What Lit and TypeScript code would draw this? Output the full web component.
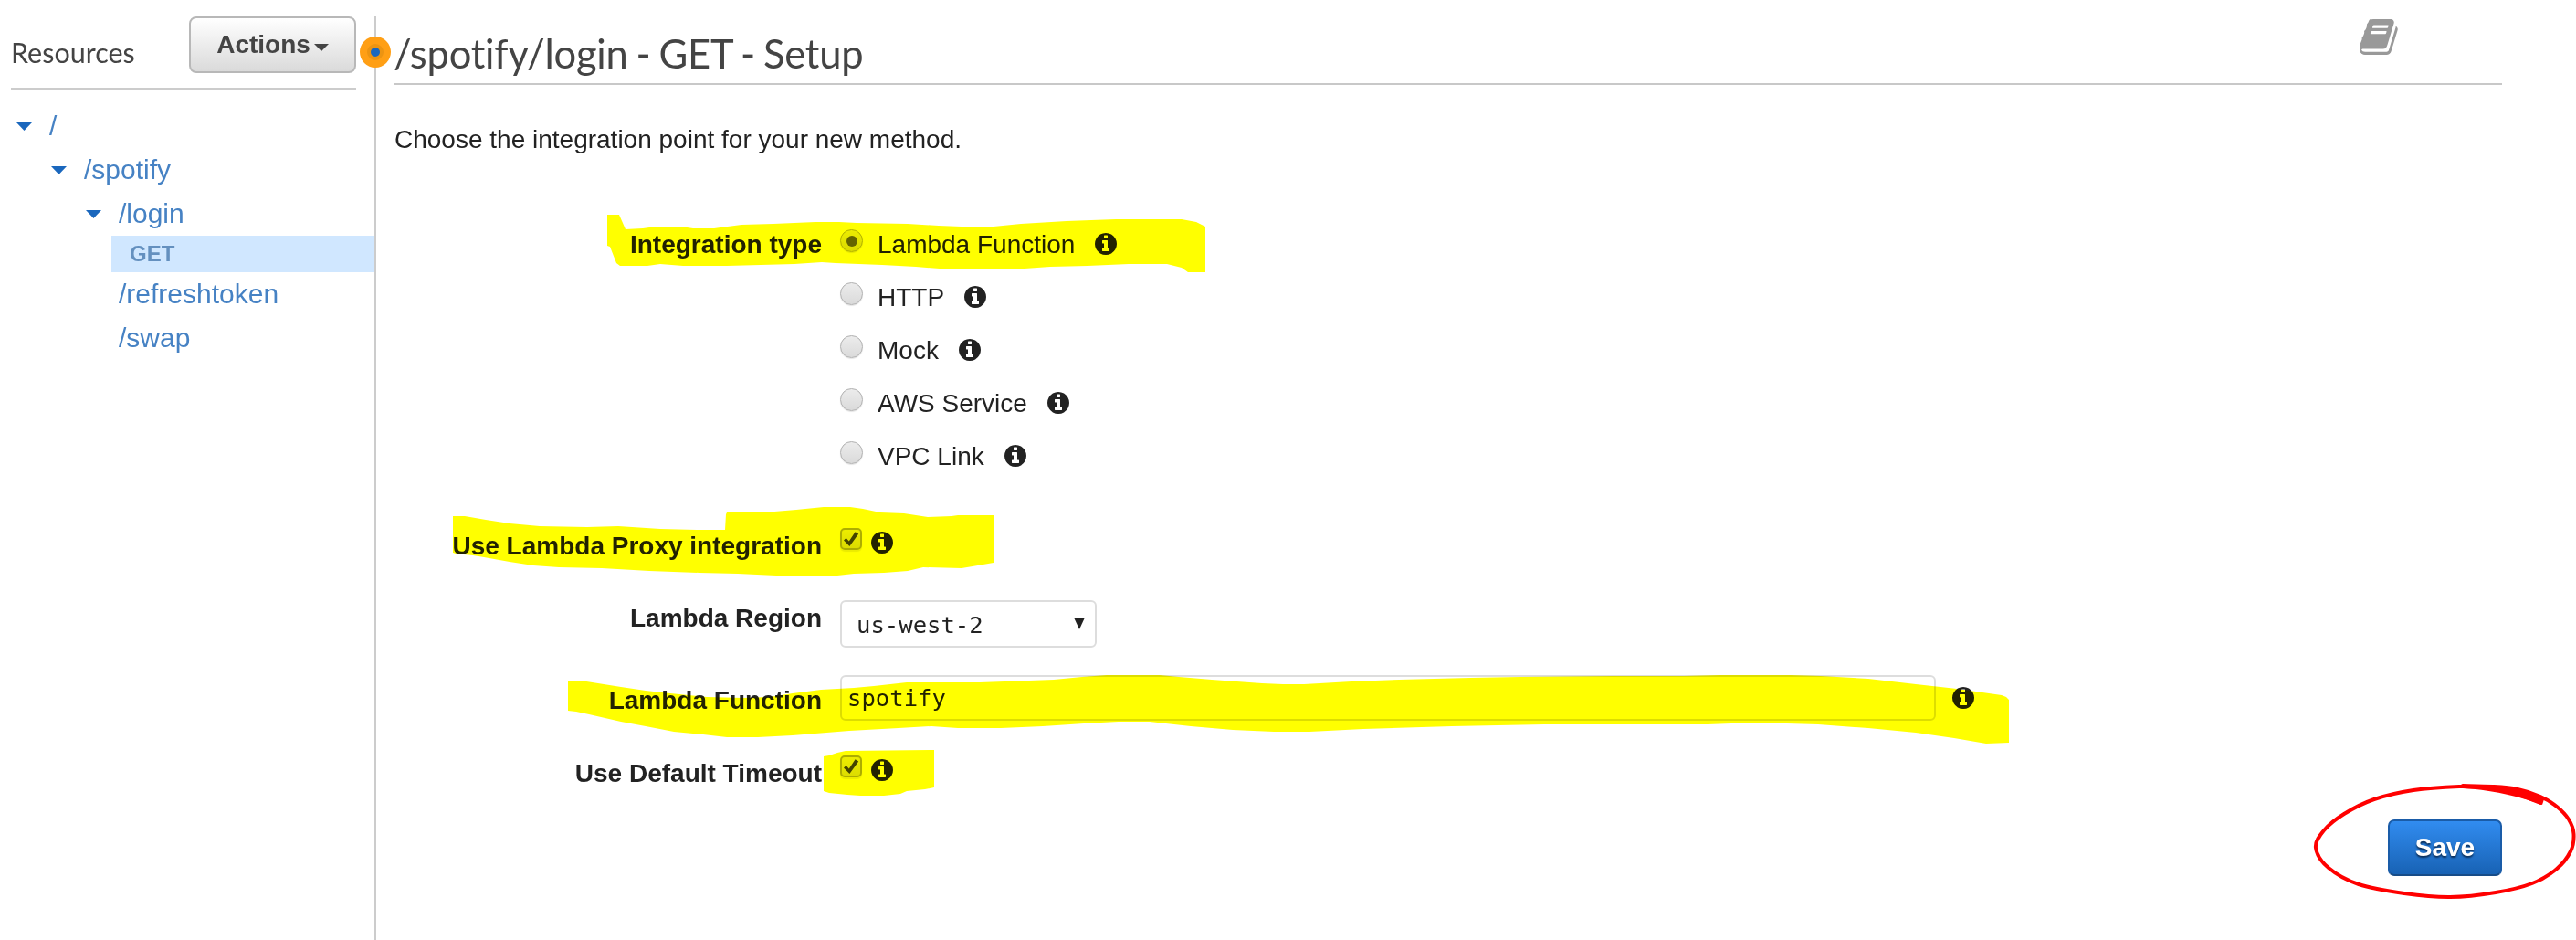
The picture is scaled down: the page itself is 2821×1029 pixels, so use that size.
import { LitElement, html, css, svg, nothing } from "lit";
import { customElement, property } from "lit/decorators.js";

const INFO =
  "M1152 1376v-160q0-14-9-23t-23-9h-96v-512q0-14-9-23t-23-9h-320q-14 0-23 9t-9 23v160q0 14 9 23t23 9h96v320h-96q-14 0-23 9t-9 23v160q0 14 9 23t23 9h448q14 0 23-9t9-23zm-128-896v-160q0-14-9-23t-23-9h-192q-14 0-23 9t-9 23v160q0 14 9 23t23 9h192q14 0 23-9t9-23zm640 416q0 209-103 385.5t-279.5 279.5-385.5 103-385.5-103-279.5-279.5-103-385.5 103-385.5 279.5-279.5 385.5-103 385.5 103 279.5 279.5 103 385.5z";
const BOOK =
  "M1639 478q40 57 18 129l-275 906q-19 64-76.5 107.5t-122.5 43.5h-923q-77 0-148.5-53.5t-99.5-131.5q-24-67-2-127 0-4 3-27t4-37q1-8-3-21.5t-3-19.5q2-11 8-21t16.5-23.5 16.5-23.5q23-38 45-91.5t30-91.5q3-10 .5-30t-.5-28q3-11 17-28t17-23q21-36 42-92t25-90q1-9-2.5-32t.5-28q4-13 22-30.5t22-22.5q19-26 42.5-84.5t27.5-96.5q1-8-3-25.5t-2-26.5q2-8 9-18t18-23 17-21q8-12 16.5-30.5t15-35 16-36 19.5-32 26.5-23.5 36-11.5 47.5 5.5l-1 3q38-9 51-9h761q74 0 114 56t18 130l-274 906q-36 119-71.5 153.5t-128.5 34.5h-869q-27 0-38 15-11 16-1 43 24 70 144 70h923q29 0 56-15.5t35-41.5l300-987q7-22 5-57 38 15 59 43zm-1064 2q-4 13 2 22.5t20 9.5h608q13 0 25.5-9.5t16.5-22.5l21-64q4-13-2-22.5t-20-9.5h-608q-13 0-25.5 9.5t-16.5 22.5zm-83 256q-4 13 2 22.5t20 9.5h608q13 0 25.5-9.5t16.5-22.5l21-64q4-13-2-22.5t-20-9.5h-608q-13 0-25.5 9.5t-16.5 22.5z";

/* Freehand marker strokes laid over the form. */
const MARKS = [
  "665,235 678,235 685,251 704,250 718,248 746,248 759,250 782,250 789,249 812,246 847,245 870,244 893,243 919,243 938,244 994,245 1028,247 1053,248 1088,248 1118,245 1168,242 1222,240 1294,240 1310,243 1320,248 1320,298 1301,298 1294,293 1278,289 1236,289 1191,291 1150,292 1108,295 1042,295 1003,292 966,290 915,288 900,287 870,289 833,290 796,291 748,291 723,289 709,291 679,291 675,288 668,270 665,269",
  "496,565 509,565 532,569 558,573 591,576 643,577 677,576 723,579 763,580 794,580 795,563 796,561 836,561 872,558 902,555 931,555 945,557 964,561 990,562 1016,566 1042,565 1049,564 1088,564 1088,616 1065,620 1053,622 1011,621 994,625 968,627 935,628 917,630 850,630 808,628 766,627 711,625 659,622 612,621 584,619 558,615 530,610 518,608 499,606 496,605",
  "622,745 636,745 680,752 707,756 734,759 774,763 814,764 843,763 868,759 899,755 935,753 957,751 993,747 1073,747 1127,745 1154,744 1185,741 1212,739 1270,739 1291,741 1327,744 1382,748 1405,749 1428,749 1480,746 1532,744 1610,742 1665,741 1766,740 1844,740 1883,739 1961,739 1994,740 2046,743 2098,749 2143,754 2192,761 2197,763 2200,766 2200,813 2175,814 2140,808 2098,802 2046,797 1991,793 1922,791 1870,793 1691,793 1590,795 1493,798 1434,801 1395,801 1350,799 1304,795 1259,790 1225,790 1187,792 1142,795 1096,797 1049,797 1020,795 984,797 930,800 868,805 830,807 796,807 770,804 738,801 707,795 680,790 645,782 631,779 622,778",
  "902,828 908,827 917,824 926,822 1023,821 1023,862 1013,864 993,866 986,869 968,871 942,871 928,870 908,868 902,866",
];

/* Points along the red loop around the Save button. */
const LOOP = [
  [2782, 879], [2764, 872], [2740, 865], [2717, 862], [2693, 861], [2643, 865], [2600, 875], [2567, 891], [2545, 909], [2536, 928],
  [2550, 950], [2583, 968], [2633, 978], [2683, 982], [2733, 977], [2773, 967], [2800, 951], [2815, 932], [2818.5, 913],
  [2813, 897], [2800, 883], [2782, 872], [2757, 864], [2730, 861], [2697, 860],
];

function smooth(p: number[][]): string {
  let d = `M${p[0]}`;
  for (let i = 0; i < p.length - 1; i++) {
    const a = p[Math.max(i - 1, 0)], b = p[i], c = p[i + 1], e = p[Math.min(i + 2, p.length - 1)];
    d += `C${b[0] + (c[0] - a[0]) / 6} ${b[1] + (c[1] - a[1]) / 6} ${c[0] - (e[0] - b[0]) / 6} ${c[1] - (e[1] - b[1]) / 6} ${c[0]} ${c[1]}`;
  }
  return d;
}

@customElement("info-icon")
export class InfoIcon extends LitElement {
  static styles = css`
    :host { display: block; width: 24px; height: 24px; flex: none; }
    svg { display: block; width: 24px; height: 24px; fill: #222; }
  `;
  render() {
    return html`<svg viewBox="128 128 1536 1536"><path d=${INFO}></path></svg>`;
  }
}

@customElement("check-box")
export class CheckBox extends LitElement {
  static styles = css`
    :host { display: block; flex: none; }
    .box {
      box-sizing: border-box; width: 24px; height: 24px; border: 2px solid #adadad; border-radius: 5px;
      background: linear-gradient(#ededed, #dcdcdc); box-shadow: 0 2px 1px #ececec;
    }
    svg { display: block; width: 20px; height: 20px; overflow: visible; }
  `;
  render() {
    return html`<div class="box"><svg viewBox="0 0 20 20">
      <path d="M2 11.5 L4.6 9 L7.8 12.4 L14.6 2.2 L18.2 4.6 L8.4 18 Z" fill="#444"></path></svg></div>`;
  }
}

@customElement("tree-node")
export class TreeNode extends LitElement {
  @property() label = "";
  @property({ type: Number }) level = 0;
  @property({ type: Boolean }) open = false;
  static styles = css`
    :host { display: block; }
    .row { display: flex; align-items: center; height: 48px; font-size: 30px; line-height: 48px; color: #4682c4; }
    .caret { width: 17px; height: 9px; margin-right: 19px; flex: none; fill: #1a67bd; }
  `;
  render() {
    return html`<div class="row" style="padding-left:${18 + this.level * 38}px">
      <svg class="caret" viewBox="0 0 17 9">${this.open ? svg`<path d="M0 0H17L8.5 9Z"></path>` : nothing}</svg>
      <span>${this.label}</span>
    </div>`;
  }
}

@customElement("app-root")
export class AppRoot extends LitElement {
  static styles = css`
    :host {
      display: block; position: relative; width: 2821px; height: 1029px; overflow: hidden; background: #fff;
      font-family: "Liberation Sans", Arial, sans-serif; font-size: 28px; line-height: 32px; color: #222;
      isolation: isolate;
    }
    .page { display: flex; height: 1029px; box-sizing: border-box; padding-top: 18px; }
    .side { width: 410px; flex: none; border-right: 2px solid #ccc; }
    .side-head {
      display: flex; justify-content: space-between; box-sizing: border-box; height: 80px;
      margin: 0 20px 0 12px; border-bottom: 2px solid #ccc;
    }
    .side-title { font-family: Lato, Carlito, sans-serif; font-size: 30.5px; line-height: 36px; color: #444; padding-top: 21px; }
    .actions {
      box-sizing: border-box; width: 183px; height: 62px; border: 2px solid #b8b8b8; border-radius: 8px;
      background: linear-gradient(#fff, #dadada); font-weight: bold; color: #444;
      display: flex; align-items: center; justify-content: center; gap: 4px;
    }
    .actions svg { width: 16px; height: 8px; fill: #444; margin-top: 5px; }
    .tree { padding-top: 16px; }
    .method {
      margin-left: 122px; height: 40px; line-height: 40px; background: #d0e7ff; color: #6490bf;
      font-size: 24px; font-weight: bold; padding-left: 20px;
    }
    .knob { position: absolute; left: 394px; top: 40px; width: 34px; height: 34px; }
    .main { width: 2308px; margin-left: 20px; display: flex; flex-direction: column; }
    .head {
      display: flex; justify-content: space-between; box-sizing: border-box; height: 75px;
      border-bottom: 2px solid #c8c8c8; padding-right: 114px;
    }
    .title {
      font-family: Lato, Carlito, sans-serif; font-size: 43.5px; line-height: 52px; color: #444; padding-top: 14px;
      white-space: pre; font-variant-ligatures: none; letter-spacing: -0.2px; word-spacing: -2px; margin-left: -1px;
    }
    .book { width: 41px; height: 39px; margin-top: 3px; fill: #999; }
    .intro { margin-top: 44px; }
    .form { display: grid; grid-template-columns: 468px 1fr; column-gap: 20px; margin-top: 82px; }
    .label { text-align: right; font-weight: bold; white-space: nowrap; padding-top: 1px; box-sizing: border-box; }
    .line { display: flex; align-items: flex-start; }
    .r-type { height: 58px; }
    .radio {
      box-sizing: border-box; width: 25px; height: 25px; border-radius: 50%; border: 1.5px solid #b0b0b0; flex: none;
      background: linear-gradient(#ececec, #dadada); box-shadow: 0 1px 1px #e4e4e4; display: grid; place-items: center;
    }
    .dot { width: 12px; height: 12px; border-radius: 50%; background: #646464; }
    .opt { margin-left: 16px; margin-right: 22px; white-space: nowrap; padding-top: 1px; }
    .r-type info-icon { margin-top: 4px; }
    .select {
      box-sizing: border-box; width: 281px; height: 52px; border: 2px solid #ddd; border-radius: 6px; background: #fff;
      display: flex; align-items: center; justify-content: space-between; padding: 2px 11px 0 16px;
    }
    .mono { font-family: "DejaVu Sans Mono", monospace; font-size: 25.6px; }
    .select svg { width: 12px; height: 13px; margin-top: -3px; fill: #222; }
    .input {
      box-sizing: border-box; width: 1200px; height: 50px; border: 2px solid #ddd; border-radius: 6px; background: #fff;
      padding: 8px 0 0 6px; line-height: 30px;
    }
    .foot { display: flex; justify-content: flex-end; margin-top: 36px; }
    .save {
      box-sizing: border-box; width: 125px; height: 62px; border: 2px solid #1a5ca8; border-bottom-color: #174c88; border-radius: 7px;
      background: linear-gradient(#318cf0, #1862b4); color: #fff; font-weight: bold; text-align: center; line-height: 58px;
      text-shadow: 0 2px 2px #0b2d55;
    }
    .ink { position: absolute; left: 0; top: 0; width: 2821px; height: 1029px; pointer-events: none; }
    .marker { mix-blend-mode: multiply; fill: #ff0; }
  `;

  private option(name: string, on = false) {
    return html`<div class="line r-type">
      <div class="radio">${on ? html`<div class="dot"></div>` : nothing}</div>
      <div class="opt">${name}</div><info-icon></info-icon>
    </div>`;
  }

  render() {
    const gap = (h: number) => `height:${h}px`;
    return html`
      <div class="page">
        <div class="side">
          <div class="side-head">
            <div class="side-title">Resources</div>
            <div class="actions">Actions<svg viewBox="0 0 16 8"><path d="M0 0H16L8 8Z"></path></svg></div>
          </div>
          <div class="tree">
            <tree-node label="/" level="0" open></tree-node>
            <tree-node label="/spotify" level="1" open></tree-node>
            <tree-node label="/login" level="2" open></tree-node>
            <div class="method">GET</div>
            <tree-node label="/refreshtoken" level="2"></tree-node>
            <tree-node label="/swap" level="2"></tree-node>
          </div>
        </div>
        <div class="main">
          <div class="head">
            <div class="title">/spotify/login - GET - Setup</div>
            <svg class="book" viewBox="64 128 1610 1536" preserveAspectRatio="none"><path d=${BOOK}></path></svg>
          </div>
          <div class="intro">Choose the integration point for your new method.</div>
          <div class="form">
            <div class="label">Integration type</div>
            <div>
              ${this.option("Lambda Function", true)} ${this.option("HTTP")} ${this.option("Mock")}
              ${this.option("AWS Service")} ${this.option("VPC Link")}
            </div>
            <div class="label" style=${gap(79)}><div style="padding-top:40px">Use Lambda Proxy integration</div></div>
            <div class="line" style="padding-top:37px"><check-box></check-box><info-icon style="margin:4px 0 0 10px"></info-icon></div>
            <div class="label" style=${gap(82)}><div style="padding-top:40px">Lambda Region</div></div>
            <div class="line" style="padding-top:37px;height:45px"><div class="select"><span class="mono">us-west-2</span><svg viewBox="0 0 12 13"><path d="M0 0H12L6 13Z"></path></svg></div></div>
            <div class="label" style=${gap(88)}><div style="padding-top:48px">Lambda Function</div></div>
            <div class="line" style="padding-top:37px;height:51px"><div class="input mono">spotify</div><info-icon style="margin:13px 0 0 18px"></info-icon></div>
            <div class="label" style=${gap(71)}><div style="padding-top:40px">Use Default Timeout</div></div>
            <div class="line" style="padding-top:37px;height:34px"><check-box></check-box><info-icon style="margin:4px 0 0 10px"></info-icon></div>
          </div>
          <div class="foot"><div class="save">Save</div></div>
        </div>
      </div>
      <svg class="knob" viewBox="0 0 34 34">
        <circle cx="17" cy="17" r="17" fill="#ff9f15"></circle><circle cx="17" cy="17" r="9" fill="#ec9412"></circle>
        <circle cx="17" cy="17" r="5" fill="#1a67bd"></circle>
      </svg>
      <svg class="ink marker" viewBox="0 0 2821 1029">${MARKS.map((m) => svg`<polygon points=${m}></polygon>`)}</svg>
      <svg class="ink" viewBox="0 0 2821 1029">
        <path fill="none" stroke="#f00" stroke-width="4" stroke-linecap="round" stroke-linejoin="round" d=${smooth(LOOP)}></path>
        <path fill="#f00" d="M2697 859C2740 859 2765 865 2786 875L2784 881C2765 874 2735 865 2697 863Z"></path>
      </svg>
    `;
  }
}
